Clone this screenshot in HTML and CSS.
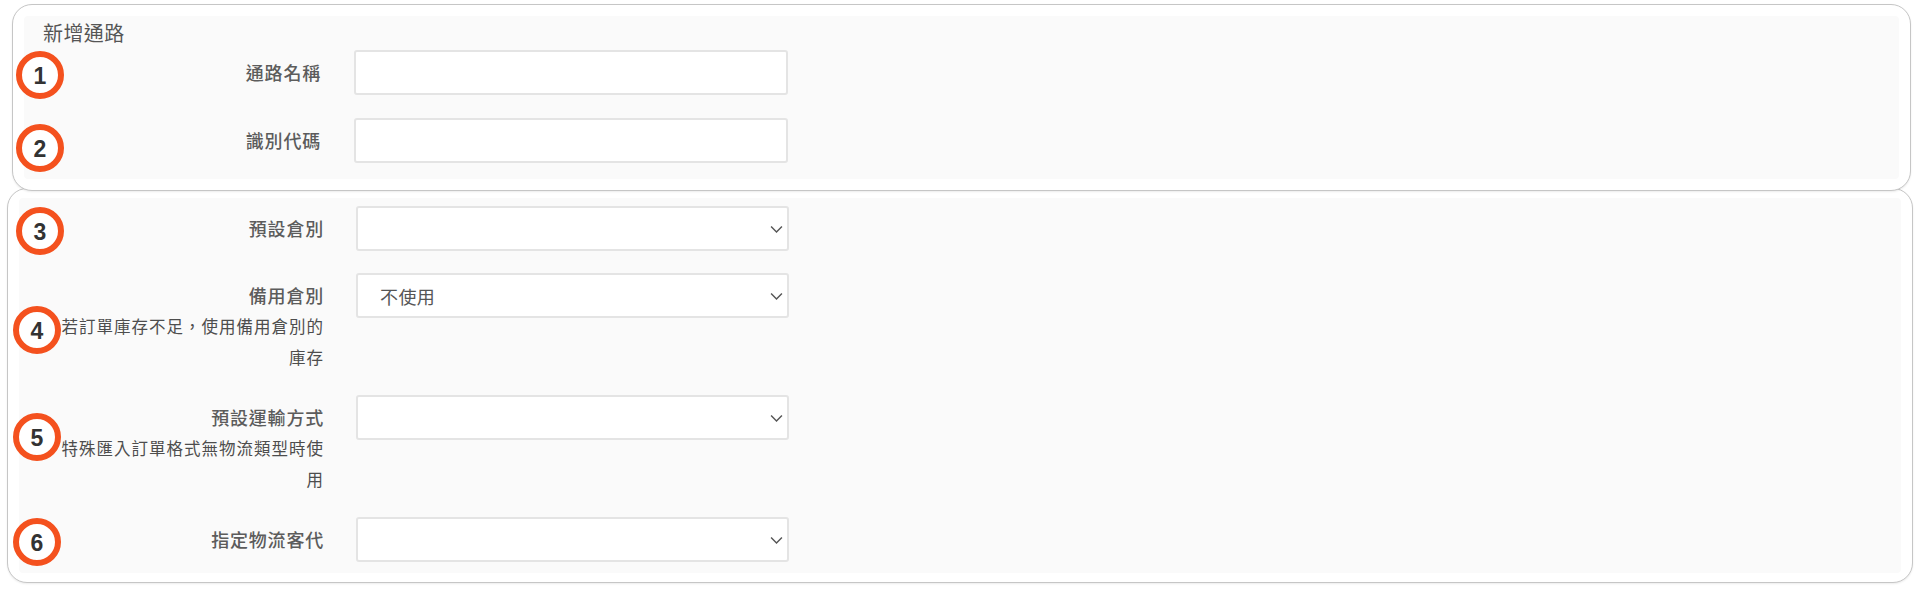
FILE: index.html
```html
<!DOCTYPE html>
<html lang="zh-Hant">
<head>
<meta charset="utf-8">
<title>新增通路</title>
<link rel="stylesheet" href="styles.css">
</head>
<body>
<main class="sheet">
  <section class="card card-top">
    <div class="panel panel-top">
      <h2 class="title">新增通路</h2>
      <div class="row">
        <label class="label">通路名稱</label>
        <input class="field" type="text">
      </div>
      <div class="row">
        <label class="label">識別代碼</label>
        <input class="field" type="text">
      </div>
    </div>
  </section>
  <section class="card card-bottom">
    <div class="panel panel-bottom">
      <div class="row">
        <label class="label">預設倉別</label>
        <div class="select-wrap">
          <select class="field select"><option></option></select>
          <svg class="chevron" viewBox="0 0 12 8"><path d="M1 1.2 6 6.4 11 1.2"/></svg>
        </div>
      </div>
      <div class="row">
        <label class="label">備用倉別<small class="hint">若訂單庫存不足&#xFF0C;使用備用倉別的庫存</small></label>
        <div class="select-wrap">
          <select class="field select"><option>不使用</option></select>
          <svg class="chevron" viewBox="0 0 12 8"><path d="M1 1.2 6 6.4 11 1.2"/></svg>
        </div>
      </div>
      <div class="row">
        <label class="label">預設運輸方式<small class="hint">特殊匯入訂單格式無物流類型時使用</small></label>
        <div class="select-wrap">
          <select class="field select"><option></option></select>
          <svg class="chevron" viewBox="0 0 12 8"><path d="M1 1.2 6 6.4 11 1.2"/></svg>
        </div>
      </div>
      <div class="row">
        <label class="label">指定物流客代</label>
        <div class="select-wrap">
          <select class="field select"><option></option></select>
          <svg class="chevron" viewBox="0 0 12 8"><path d="M1 1.2 6 6.4 11 1.2"/></svg>
        </div>
      </div>
    </div>
  </section>
  <span class="pin pin-1">1</span>
  <span class="pin pin-2">2</span>
  <span class="pin pin-3">3</span>
  <span class="pin pin-4">4</span>
  <span class="pin pin-5">5</span>
  <span class="pin pin-6">6</span>
</main>
</body>
</html>
```

FILE: styles.css
```css
* { box-sizing: border-box; }
html, body { margin: 0; background: #fff; }
body {
  font-family: "Noto Sans CJK TC", "Noto Sans", sans-serif;
  color: #555;
}
.sheet {
  position: relative;
  width: 1920px;
  height: 594px;
  padding-top: 4px;
  overflow: hidden;
}
.card {
  background: #fff;
  border: 1.5px solid #c6c6c6;
  border-radius: 20px;
  box-shadow: 0 1px 2px rgba(0, 0, 0, .08);
}
.card-top {
  position: relative;
  z-index: 1;
  margin: 0 9px 0 12px;
  height: 187px;
  padding: 11px;
}
.card-bottom {
  margin: -3px 7px 0;
  height: 395px;
  padding: 9px 11px;
}
.panel {
  height: 100%;
  background: #fafafa;
  border-radius: 4px;
}
.panel-top { padding: 1px 0 0; }
.panel-bottom { padding: 8px 0 0; }
.title {
  margin: 0 0 2px 19px;
  font-size: 20px;
  line-height: 31px;
  font-weight: 400;
  letter-spacing: .4px;
  color: #555;
}
.row {
  display: flex;
  align-items: flex-start;
  min-height: 45px;
  margin-bottom: 22px;
}
.panel-top .row { margin-bottom: 23px; }
.label {
  flex: 0 0 auto;
  text-align: right;
  font-size: 18px;
  line-height: 31px;
  letter-spacing: .8px;
  font-weight: 500;
  color: #5c5c5c;
  padding-top: 7px;
}
.panel-top .label { width: 297px; margin-right: 33px; }
.panel-bottom .label { width: 264px; margin-left: 41px; margin-right: 32px; }
.hint {
  display: block;
  font-size: 16.5px;
  letter-spacing: 1px;
  font-weight: 400;
  color: #4d4d4d;
}
.field {
  display: block;
  width: 434px;
  height: 45px;
  background: #fff;
  border: 2px solid #e4e4e4;
  border-radius: 3px;
  outline: none;
}
.select-wrap { position: relative; }
.select {
  appearance: none;
  width: 433px;
  padding: 0 0 0 22px;
  font-family: inherit;
  font-size: 18px;
  letter-spacing: .4px;
  color: #555;
}
.chevron {
  position: absolute;
  right: 6px;
  top: 19px;
  width: 13px;
  height: 9px;
  fill: none;
  stroke: #555;
  stroke-width: 1.3;
}
.pin {
  position: absolute;
  z-index: 2;
  width: 48px;
  height: 48px;
  border: 6px solid #f4511e;
  border-radius: 50%;
  background: #fff;
  display: flex;
  align-items: center;
  justify-content: center;
  padding-top: 3px;
  font-family: "Liberation Sans", Arial, sans-serif;
  font-weight: 700;
  font-size: 23px;
  color: #333;
}
.pin-1 { left: 16px; top: 51px; }
.pin-2 { left: 16px; top: 124px; }
.pin-3 { left: 16px; top: 207px; }
.pin-4 { left: 13px; top: 306px; }
.pin-5 { left: 13px; top: 413px; }
.pin-6 { left: 13px; top: 518px; }
```
